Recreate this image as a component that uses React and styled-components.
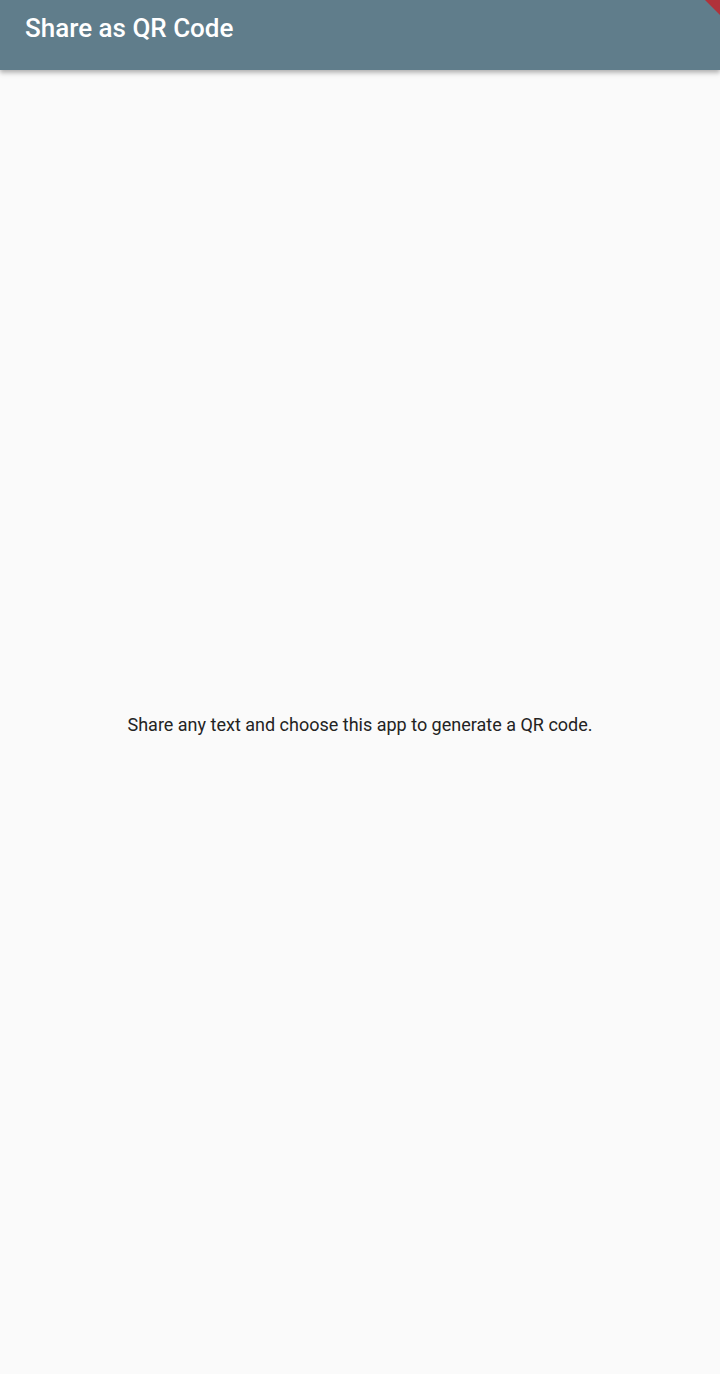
import React from "react";
import styled, { createGlobalStyle } from "styled-components";

const GlobalStyle = createGlobalStyle`
  html, body {
    margin: 0;
    padding: 0;
    background: #fafafa;
  }
  #root {
    min-height: 100vh;
  }
`;

const Screen = styled.div`
  position: relative;
  display: flex;
  flex-direction: column;
  height: 100vh;
  overflow: hidden;
  background: #fafafa;
  font-family: Roboto, "Liberation Sans", sans-serif;
`;

const AppBar = styled.header`
  display: flex;
  align-items: center;
  height: 70px;
  padding: 0 25px;
  flex-shrink: 0;
  background: #607d8b;
  box-shadow: 0 2px 4px rgba(0, 0, 0, 0.2), 0 4px 5px rgba(0, 0, 0, 0.12);
  z-index: 1;
`;

const Title = styled.h1`
  margin: 0;
  margin-top: -14px;
  font-size: 26px;
  font-weight: 500;
  color: #fff;
`;

const Body = styled.main`
  flex: 1;
  display: flex;
  align-items: center;
  justify-content: center;
`;

const Message = styled.p`
  margin: 0;
  margin-top: 4px;
  font-size: 18px;
  color: #232323;
`;

const DebugCorner = styled.svg`
  position: absolute;
  top: 0;
  right: 0;
  width: 16px;
  height: 16px;
  z-index: 2;
`;

const App = () => {
  return (
    <>
      <GlobalStyle />
      <Screen>
        <AppBar>
          <Title>Share as QR Code</Title>
        </AppBar>
        <Body>
          <Message>
            Share any text and choose this app to generate a QR code.
          </Message>
        </Body>
        <DebugCorner viewBox="0 0 16 16">
          <polygon points="1,0 16,0 16,15" fill="#b0323a" />
        </DebugCorner>
      </Screen>
    </>
  );
};

export default App;
